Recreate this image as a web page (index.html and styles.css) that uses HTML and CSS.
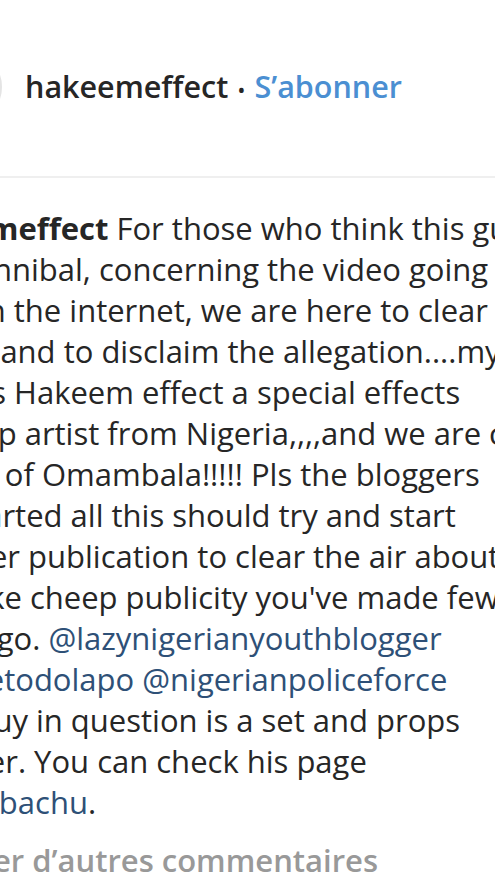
FILE: index.html
```html
<!DOCTYPE html>
<html lang="fr">
<head>
<meta charset="utf-8">
<link rel="stylesheet" href="styles.css">
</head>
<body>
<div class="page">
  <header class="post-header">
    <div class="avatar"></div>
    <div class="who">
      <span class="user">hakeemeffect</span>
      <span class="dot">•</span>
      <span class="follow">S’abonner</span>
    </div>
  </header>
  <div class="caption">
    <p class="text">
      <span class="ln"><span class="cap-user">hakeemeffect</span> For those who think this guy</span>
      <span class="ln nudge">is a cannibal, concerning the video going</span>
      <span class="ln nudge-s">viral on the internet, we are here to clear</span>
      <span class="ln nudge-s">the air.and to disclaim the allegation....my</span>
      <span class="ln">name is Hakeem effect a special effects</span>
      <span class="ln nudge-s">makeup artist from Nigeria,,,,and we are citizens</span>
      <span class="ln pull">proudly. of Omambala!!!!! Pls the bloggers</span>
      <span class="ln">that started all this should try and start</span>
      <span class="ln nudge">another publication to clear the air about</span>
      <span class="ln nudge">the fake cheep publicity you've made few</span>
      <span class="ln nudge">days ago. <a class="mention">@lazynigerianyouthblogger</a></span>
      <span class="ln"><a class="mention">@omoetodolapo</a> <a class="mention">@nigerianpoliceforce</a></span>
      <span class="ln nudge-l">The guy in question is a set and props</span>
      <span class="ln">designer. You can check his page</span>
      <span class="ln"><a class="mention">@ezembachu</a>.</span>
    </p>
    <p class="more nudge">Charger d’autres commentaires</p>
  </div>
</div>
</body>
</html>
```

FILE: styles.css
```css
html, body {
  margin: 0;
  padding: 0;
  background: #ffffff;
  overflow: hidden;
}
.page {
  width: 495px;
  height: 880px;
  overflow: hidden;
  font-family: "Open Sans", "Noto Sans", "DejaVu Sans", sans-serif;
  color: #262626;
}
.post-header {
  height: 178px;
  display: flex;
  align-items: center;
  gap: 23px;
  margin-left: -70px;
  border-bottom: 2px solid #efefef;
  box-sizing: border-box;
}
.avatar {
  width: 68px;
  height: 68px;
  flex: none;
  border-radius: 50%;
  border: 2px solid #e4e4e4;
  background: #f4f4f4;
  margin-top: -2px;
}
.who {
  display: flex;
  align-items: baseline;
  white-space: nowrap;
  font-size: 30.5px;
  margin-top: -4px;
}
.user {
  font-weight: 600;
  color: #262626;
}
.dot {
  margin: 0 9px;
  font-size: 22px;
  color: #262626;
}
.follow {
  font-weight: 600;
  color: #4b8fd2;
}
.caption {
  margin-left: -107px;
  padding-top: 30px;
}
.text {
  margin: 0;
  font-size: 31px;
  line-height: 41px;
  white-space: nowrap;
}
.ln {
  display: block;
}
.nudge {
  padding-left: 12px;
}
.nudge-s {
  padding-left: 6px;
}
.nudge-l {
  padding-left: 22px;
}
.pull {
  margin-left: -16px;
}
.cap-user {
  font-weight: 700;
}
.mention {
  color: #2e5077;
  text-decoration: none;
}
.more {
  margin: 17px 0 0 0;
  font-size: 31px;
  line-height: 41px;
  color: #999999;
  font-weight: 600;
  white-space: nowrap;
}
```
